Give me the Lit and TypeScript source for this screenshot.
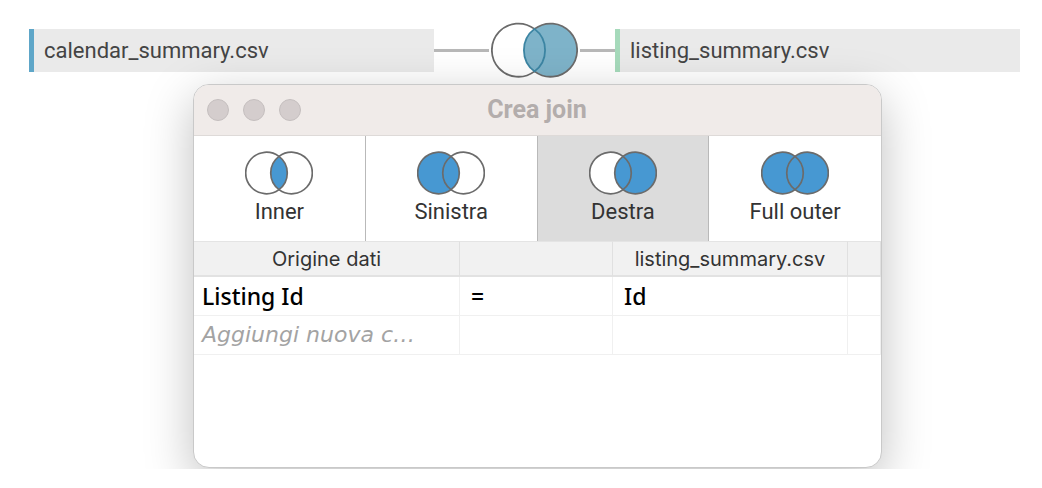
import { LitElement, html, svg, css } from "lit";
import { customElement, property, state } from "lit/decorators.js";
import { classMap } from "lit/directives/class-map.js";

type JoinType = "inner" | "left" | "right" | "full";

@customElement("join-icon")
class JoinIcon extends LitElement {
  static styles = css`
    :host { display: block; }
    svg { display: block; width: 100%; height: auto; }
    .base { fill: #fff; }
    .fill { fill: var(--join-fill, #4798d2); }
    .ring { fill: none; stroke: #6b6b6b; stroke-width: var(--join-stroke, 1.7); }
    .arc { fill: none; stroke: var(--join-arc, #6b6b6b); stroke-width: var(--join-stroke, 1.7); }
  `;

  @property() type: JoinType = "inner";

  render() {
    const left = svg`<circle class="fill" cx="21.5" cy="22" r="20.8"></circle>`;
    const right = svg`<circle class="fill" cx="46.5" cy="22" r="20.8"></circle>`;
    const lens = svg`<path class="fill" d="M34 5.4A20.8 20.8 0 0 1 34 38.6A20.8 20.8 0 0 1 34 5.4Z"></path>`;
    return html`
      <svg viewBox="0 0 68 44" aria-hidden="true">
        <circle class="base" cx="21.5" cy="22" r="20.8"></circle>
        <circle class="base" cx="46.5" cy="22" r="20.8"></circle>
        ${this.type === "inner" ? lens : ""}
        ${this.type === "left" || this.type === "full" ? left : ""}
        ${this.type === "right" || this.type === "full" ? right : ""}
        <path class="ring" d="M34 5.4A20.8 20.8 0 1 0 34 38.6"></path>
        <path class="ring" d="M34 5.4A20.8 20.8 0 1 1 34 38.6"></path>
        <path class="arc" d="M34 5.4A20.8 20.8 0 0 1 34 38.6A20.8 20.8 0 0 1 34 5.4Z"></path>
      </svg>
    `;
  }
}

@customElement("app-root")
class AppRoot extends LitElement {
  static styles = css`
    :host {
      display: block;
      background: #fff;
      color: #444;
      font-family: Roboto, "Liberation Sans", sans-serif;
      font-size: 22px;
      line-height: 26px;
    }
    * { box-sizing: border-box; }
    button { font: inherit; color: inherit; border: 0; padding: 0; background: none; }

    .canvas { padding: 22px 22px 1px 29px; overflow: hidden; }

    .flow { display: grid; grid-template-columns: 1fr 181px 1fr; align-items: center; }
    .source {
      padding: 8px 10px;
      background: #eaeaea;
      border-left: 5px solid #5ea6c8;
      line-height: 27px;
      text-align: left;
    }
    .source.second { border-left-color: #a6dabb; }
    .link { display: flex; align-items: center; }
    .wire { flex: 1; height: 3px; background: #b8b8b8; }
    .wire.short { flex: 0 0 35px; }
    .venn {
      width: 91px;
      padding: 0 2px;
      --join-fill: #7eb3c9;
      --join-arc: #3c85a3;
      --join-stroke: 1.4;
    }

    .stage { display: grid; grid-template-columns: 164px 1fr 138px; margin-top: 6px; }
    .dialog {
      grid-column: 2;
      isolation: isolate;
      border: 1px solid #c9c9c9;
      border-radius: 16px;
      background: #fff;
      box-shadow: 0 14px 48px rgba(0, 0, 0, 0.25);
    }
    .titlebar {
      display: grid;
      grid-template-columns: 1fr auto 1fr;
      align-items: center;
      height: 51px;
      padding: 0 14px 0 13px;
      background: #f0ebe9;
      border-bottom: 1px solid #dedad8;
      border-radius: 15px 15px 0 0;
    }
    .lights { display: flex; gap: 14px; }
    .light { width: 22px; height: 22px; border-radius: 50%; background: #d4cdcd; border: 1px solid #c5bfbf; }
    .title { margin: 0; font-size: 25px; line-height: 30px; font-weight: 700; color: #b3adac; }

    .types { display: grid; grid-template-columns: repeat(4, 1fr); }
    .type {
      display: flex;
      flex-direction: column;
      align-items: center;
      gap: 4px;
      padding: 15px 0 16px;
      color: #333;
      border-right: 1px solid #b9b9b9;
    }
    .type:last-child { border-right: 0; }
    .type.active { background: #dcdcdc; }
    .glyph { width: 68px; }

    .clauses {
      width: 100%;
      table-layout: fixed;
      border-collapse: separate;
      border-spacing: 0;
      margin-bottom: 112px;
      font-family: "Noto Sans", sans-serif;
      color: #000;
    }
    .c-op { width: 153px; }
    .c-right { width: 235px; }
    .c-end { width: 33px; }
    th {
      height: 36px;
      padding: 0;
      background: #f1f1f1;
      border-top: 1px solid #e4e4e4;
      border-bottom: 2px solid #e2e2e2;
      border-right: 1px solid #e0e0e0;
      font: 400 20px/24px Inter, sans-serif;
      color: #333;
    }
    td {
      height: 39px;
      padding: 0 8px;
      border-right: 1px solid #f0f0f0;
      border-bottom: 1px solid #f0f0f0;
      font-size: 23px;
      font-weight: 500;
      white-space: nowrap;
      overflow: hidden;
    }
    td + td { padding-left: 11px; }
    .add { font-family: "DejaVu Sans", sans-serif; font-size: 22px; font-style: italic; font-weight: 400; color: #a3a3a3; }
  `;

  @state() private selected: JoinType = "right";

  private types: { id: JoinType; label: string }[] = [
    { id: "inner", label: "Inner" },
    { id: "left", label: "Sinistra" },
    { id: "right", label: "Destra" },
    { id: "full", label: "Full outer" },
  ];

  render() {
    return html`
      <main class="canvas">
        <div class="flow">
          <button class="source">calendar_summary.csv</button>
          <div class="link">
            <span class="wire"></span>
            <button class="venn" aria-label="Join">
              <join-icon .type=${this.selected}></join-icon>
            </button>
            <span class="wire short"></span>
          </div>
          <button class="source second">listing_summary.csv</button>
        </div>
        <div class="stage">
          <section class="dialog" role="dialog" aria-labelledby="title">
            <header class="titlebar">
              <div class="lights">
                <button class="light" aria-label="Chiudi"></button>
                <button class="light" aria-label="Riduci"></button>
                <button class="light" aria-label="Ingrandisci"></button>
              </div>
              <h1 class="title" id="title">Crea join</h1>
            </header>
            <div class="types">
              ${this.types.map(
                (t) => html`
                  <button
                    class=${classMap({ type: true, active: t.id === this.selected })}
                    aria-pressed=${t.id === this.selected}
                    @click=${() => (this.selected = t.id)}
                  >
                    <join-icon class="glyph" .type=${t.id}></join-icon>
                    <span>${t.label}</span>
                  </button>
                `
              )}
            </div>
            <table class="clauses">
              <colgroup>
                <col /><col class="c-op" /><col class="c-right" /><col class="c-end" />
              </colgroup>
              <thead>
                <tr><th>Origine dati</th><th></th><th>listing_summary.csv</th><th></th></tr>
              </thead>
              <tbody>
                <tr><td>Listing Id</td><td>=</td><td>Id</td><td></td></tr>
                <tr><td class="add">Aggiungi nuova c…</td><td></td><td></td><td></td></tr>
              </tbody>
            </table>
          </section>
        </div>
      </main>
    `;
  }
}
